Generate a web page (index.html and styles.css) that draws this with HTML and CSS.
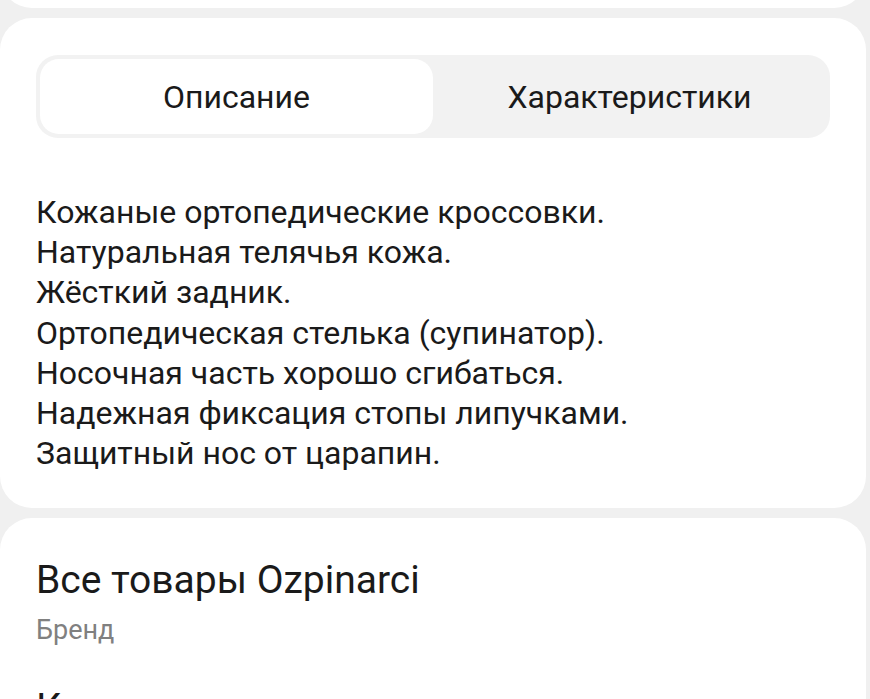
FILE: index.html
```html
<!DOCTYPE html>
<html lang="ru">
<head>
<meta charset="utf-8">
<title>Описание</title>
<link rel="stylesheet" href="styles.css">
</head>
<body>
<div class="page">
  <div class="card card-top"></div>
  <div class="card card-desc">
    <div class="tabs">
      <div class="tab tab-active">Описание</div>
      <div class="tab">Характеристики</div>
    </div>
    <div class="desc">
      <div>Кожаные ортопедические кроссовки.</div>
      <div>Натуральная телячья кожа.</div>
      <div>Жёсткий задник.</div>
      <div>Ортопедическая стелька (супинатор).</div>
      <div>Носочная часть хорошо сгибаться.</div>
      <div>Надежная фиксация стопы липучками.</div>
      <div>Защитный нос от царапин.</div>
    </div>
  </div>
  <div class="card card-brand">
    <div class="brand-title">Все товары Ozpinarci</div>
    <div class="brand-sub">Бренд</div>
    <div class="next-title">Категория</div>
  </div>
</div>
</body>
</html>
```

FILE: styles.css
```css
* { box-sizing: border-box; }
html, body {
  margin: 0;
  padding: 0;
  background: #f0f0f0;
  overflow: hidden;
}
body {
  font-family: Roboto, "Noto Sans", sans-serif;
  color: #1a1a1a;
  width: 870px;
  height: 699px;
}
.page {
  display: flex;
  flex-direction: column;
  gap: 10px;
  margin-top: -60px;
  padding-right: 4px;
}
.card {
  background: #ffffff;
  border-radius: 32px;
}
.card-top {
  height: 68px;
}
.card-desc {
  padding: 37px 36px 35px 36px;
}
.tabs {
  display: flex;
  background: #f2f2f2;
  border-radius: 22px;
  padding: 4px;
  height: 83px;
}
.tab {
  flex: 1;
  display: flex;
  align-items: center;
  justify-content: center;
  font-size: 32px;
  border-radius: 19px;
  color: #1a1a1a;
}
.tab-active {
  background: #ffffff;
}
.desc {
  margin-top: 54px;
  font-size: 32px;
  line-height: 40.2px;
}
.card-brand {
  padding: 38px 36px 0 36px;
  height: 300px;
}
.brand-title {
  font-size: 39px;
  line-height: 48px;
}
.brand-sub {
  margin-top: 10px;
  font-size: 27px;
  line-height: 32px;
  color: #808080;
}
.next-title {
  margin-top: 38px;
  font-size: 39px;
  line-height: 48px;
}
```
